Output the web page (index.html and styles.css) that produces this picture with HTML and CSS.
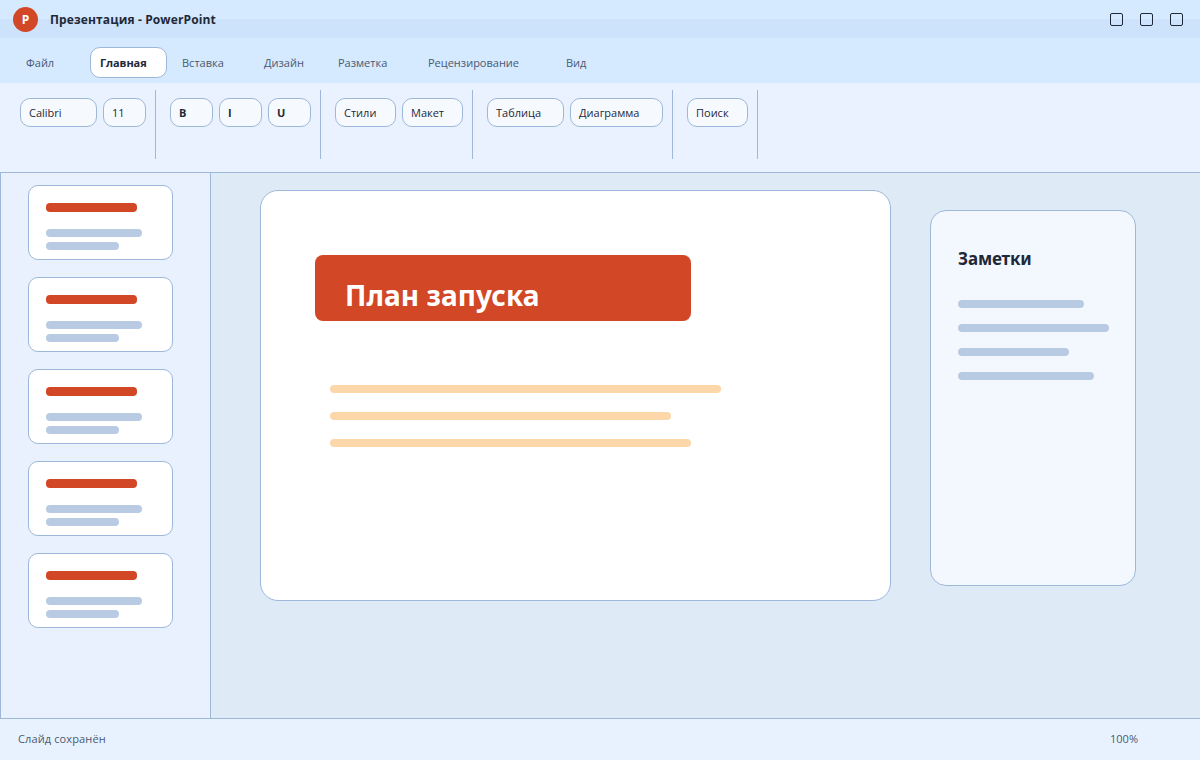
FILE: index.html
```html
<!DOCTYPE html>
<html lang="ru">
<head>
<meta charset="utf-8">
<title>Презентация - PowerPoint</title>
<link rel="stylesheet" href="styles.css">
</head>
<body>
<div class="app">
  <header class="titlebar">
    <div class="logo">P</div>
    <div class="doc-title">Презентация - PowerPoint</div>
    <div class="win-controls">
      <span class="win-btn"></span>
      <span class="win-btn"></span>
      <span class="win-btn"></span>
    </div>
  </header>
  <nav class="tabs">
    <div class="tab">Файл</div>
    <div class="tab active">Главная</div>
    <div class="tab">Вставка</div>
    <div class="tab">Дизайн</div>
    <div class="tab">Разметка</div>
    <div class="tab">Рецензирование</div>
    <div class="tab">Вид</div>
  </nav>
  <section class="ribbon">
    <div class="group">
      <div class="btn w77">Calibri</div>
      <div class="btn w43">11</div>
    </div>
    <div class="group">
      <div class="btn w43 strong">B</div>
      <div class="btn w43 strong">I</div>
      <div class="btn w43 strong">U</div>
    </div>
    <div class="group">
      <div class="btn w61">Стили</div>
      <div class="btn w61">Макет</div>
    </div>
    <div class="group">
      <div class="btn w77">Таблица</div>
      <div class="btn w93">Диаграмма</div>
    </div>
    <div class="group">
      <div class="btn w61">Поиск</div>
    </div>
  </section>
  <div class="workspace">
    <aside class="thumbs">
      <div class="thumb"><div class="bar red"></div><div class="bar blue-a"></div><div class="bar blue-b"></div></div>
      <div class="thumb"><div class="bar red"></div><div class="bar blue-a"></div><div class="bar blue-b"></div></div>
      <div class="thumb"><div class="bar red"></div><div class="bar blue-a"></div><div class="bar blue-b"></div></div>
      <div class="thumb"><div class="bar red"></div><div class="bar blue-a"></div><div class="bar blue-b"></div></div>
      <div class="thumb"><div class="bar red"></div><div class="bar blue-a"></div><div class="bar blue-b"></div></div>
    </aside>
    <main class="stage">
      <article class="slide">
        <h1 class="slide-title">План запуска</h1>
        <div class="slide-lines">
          <div class="line l1"></div>
          <div class="line l2"></div>
          <div class="line l3"></div>
        </div>
      </article>
      <aside class="notes">
        <h2 class="notes-title">Заметки</h2>
        <div class="notes-lines">
          <div class="nline n1"></div>
          <div class="nline n2"></div>
          <div class="nline n3"></div>
          <div class="nline n4"></div>
        </div>
      </aside>
    </main>
  </div>
  <footer class="status">
    <span class="saved">Слайд сохранён</span>
    <span class="zoom">100%</span>
  </footer>
</div>
</body>
</html>
```
FILE: styles.css
```css
* { box-sizing: border-box; margin: 0; padding: 0; }
html, body { width: 1200px; height: 760px; overflow: hidden; }
body { font-family: "Open Sans", "Noto Sans", sans-serif; color: #1f2937; background: #e8f2ff; }
.app { width: 1200px; height: 760px; display: flex; flex-direction: column; }

.titlebar {
  height: 38px;
  flex: none;
  display: flex;
  align-items: center;
  padding-left: 13px;
  background: linear-gradient(#d5e9ff 0, #d5e9ff 19px, #cde2fb 19px, #cde2fb 38px);
}
.logo {
  width: 25px; height: 25px; border-radius: 50%;
  background: #d24726; color: #fff;
  font-size: 12px; font-weight: 700;
  display: flex; align-items: center; justify-content: center;
}
.doc-title { margin-left: 12px; font-size: 12px; font-weight: 700; letter-spacing: 0.13px; color: #1f2937; }
.win-controls { margin-left: auto; margin-right: 17px; display: flex; gap: 17px; }
.win-btn { width: 13px; height: 13px; border: 1px solid #1f2937; border-radius: 2px; }

.tabs {
  height: 45px;
  flex: none;
  background: #d5e9ff;
  padding: 9px 0 0 16px;
  display: grid;
  grid-template-columns: 74px 82px 82px 74px 90px 138px auto;
  justify-content: start;
  align-items: start;
}
.tab { height: 31px; padding-left: 10px; font-size: 11px; line-height: 31px; color: #4a5a72; white-space: nowrap; }
.tab.active {
  width: 77px;
  background: #fff;
  border: 1px solid #9db8d9;
  border-radius: 10px;
  padding-left: 9px;
  line-height: 29px;
  font-weight: 700;
  letter-spacing: -0.1px;
  color: #1f2937;
}

.ribbon {
  height: 90px;
  flex: none;
  background: #eaf2ff;
  border-bottom: 1px solid #9db8d9;
  display: flex;
  padding: 7px 0 0 6px;
  align-items: flex-start;
}
.group {
  height: 69px;
  display: flex;
  gap: 6px;
  padding: 8px 9px 0 14px;
  border-right: 1px solid #9db8d9;
}
.btn {
  height: 29px;
  background: #f6faff;
  border: 1px solid #9db8d9;
  border-radius: 10px;
  padding-left: 8px;
  font-size: 11px;
  line-height: 27px;
  color: #1f2937;
  white-space: nowrap;
}
.strong { font-weight: 700; }
.w43 { width: 43px; }
.w61 { width: 61px; }
.w77 { width: 77px; }
.w93 { width: 93px; }

.workspace { height: 545px; flex: none; display: flex; }
.thumbs {
  width: 211px;
  flex: none;
  background: #e8f1fd;
  border-left: 1px solid #9db8d9;
  border-right: 1px solid #9db8d9;
  padding: 12px 0 0 27px;
  display: flex;
  flex-direction: column;
  gap: 17px;
}
.thumb {
  width: 145px; height: 75px; flex: none;
  background: #fff;
  border: 1px solid #9db8d9;
  border-radius: 10px;
  padding: 17px 0 0 17px;
}
.bar { border-radius: 4px; }
.red { width: 91px; height: 9px; background: #d24726; }
.blue-a { width: 96px; height: 8px; background: #b8cbe2; margin-top: 17px; }
.blue-b { width: 73px; height: 8px; background: #b8cbe2; margin-top: 5px; }

.stage {
  flex: 1;
  background: #deeaf6;
  display: flex;
  align-items: flex-start;
  padding: 17px 0 0 49px;
  gap: 39px;
}
.slide {
  width: 631px; height: 411px; flex: none;
  background: #fff;
  border: 1px solid #9db8d9;
  border-radius: 18px;
  padding: 64px 0 0 54px;
}
.slide-title {
  width: 376px; height: 66px;
  background: #d24726;
  border-radius: 8px;
  color: #fff;
  font-family: "Noto Sans", "Open Sans", sans-serif;
  font-size: 28px;
  font-weight: 700;
  line-height: 80px;
  letter-spacing: 0.08px;
  padding-left: 30px;
  overflow: hidden;
}
.slide-lines { margin: 64px 0 0 15px; display: flex; flex-direction: column; gap: 19px; }
.line { height: 8px; border-radius: 4px; background: #fdd7aa; }
.l1 { width: 391px; }
.l2 { width: 341px; }
.l3 { width: 361px; }

.notes {
  width: 206px; height: 376px; flex: none;
  margin-top: 20px;
  background: #f3f8ff;
  border: 1px solid #9db8d9;
  border-radius: 16px;
  padding: 34px 0 0 27px;
}
.notes-title {
  font-family: "Noto Sans", "Open Sans", sans-serif;
  font-size: 17px;
  font-weight: 700;
  line-height: 28px;
  letter-spacing: -0.15px;
  color: #1f2937;
}
.notes-lines { margin-top: 27px; display: flex; flex-direction: column; gap: 16px; }
.nline { height: 8px; border-radius: 4px; background: #b8cbe2; }
.n1 { width: 126px; }
.n2 { width: 151px; }
.n3 { width: 111px; }
.n4 { width: 136px; }

.status {
  height: 42px;
  flex: none;
  background: #e8f2ff;
  border-top: 1px solid #9db8d9;
  display: flex;
  align-items: center;
  padding: 0 0 3px 18px;
  font-size: 11px;
  color: #4a5a72;
}
.saved { letter-spacing: 0.12px; }
.zoom { margin-left: auto; margin-right: 62px; }
```
